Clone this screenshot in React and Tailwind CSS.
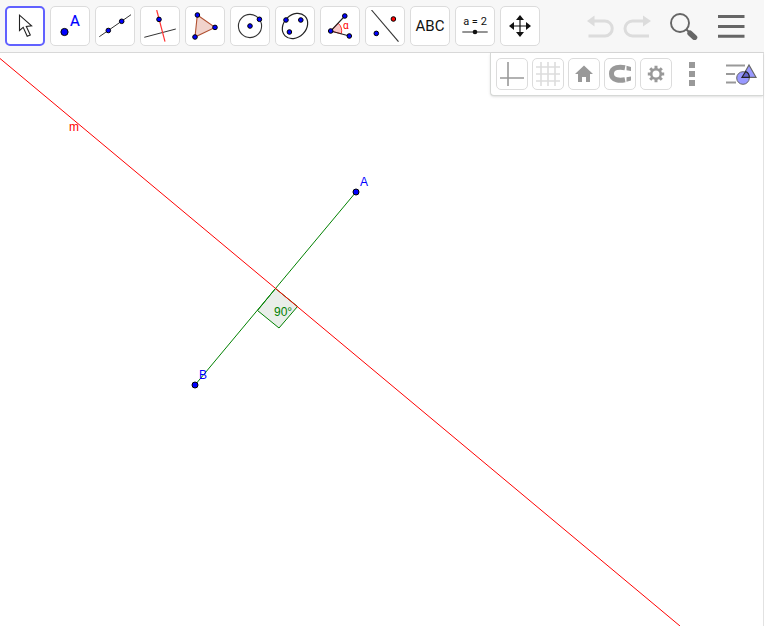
import { useState } from 'react'

const Dot = ({ x, y, r = 2.3, fill = '#0000ff' }) => (
  <circle cx={x} cy={y} r={r} fill={fill} stroke="#000" strokeWidth="1" />
)

const tools = [
  {
    name: 'Move',
    icon: <path d="M10.5 5.2V20.5L14.2 17.3L18.2 26.3L21.3 25L17.3 16.5L22.6 15.8Z" fill="#fff" stroke="#222" strokeWidth="1.1" />,
  },
  {
    name: 'Point',
    icon: (
      <>
        <Dot x={10.5} y={22} r={3.6} />
        <text x="16" y="16" fontSize="15" fill="#0000ff" stroke="#0000ff" strokeWidth="0.2">A</text>
      </>
    ),
  },
  {
    name: 'Line',
    icon: (
      <>
        <path d="M0.3 26.7L32 4.7" stroke="#333" />
        <Dot x={9.3} y={20.5} />
        <Dot x={22.7} y={11.3} />
      </>
    ),
  },
  {
    name: 'Perpendicular line',
    icon: (
      <>
        <path d="M0.3 27.3L31.8 19" stroke="#333" />
        <path d="M12.7 0L21 31.7" stroke="#ff3333" strokeWidth="1.2" />
        <Dot x={15} y={9.4} />
      </>
    ),
  },
  {
    name: 'Polygon',
    icon: (
      <>
        <path d="M8.3 5L26 17.4L6 27Z" fill="#f1d3cc" stroke="#b05030" strokeWidth="1.1" />
        <Dot x={8.4} y={5} />
        <Dot x={26} y={17.4} />
        <Dot x={6} y={27} />
      </>
    ),
  },
  {
    name: 'Circle with centre',
    icon: (
      <>
        <circle cx="16" cy="16" r="11.6" stroke="#333" strokeWidth="1.1" />
        <Dot x={16} y={16} />
        <Dot x={25.4} y={9.3} />
      </>
    ),
  },
  {
    name: 'Ellipse',
    icon: (
      <>
        <ellipse cx="16" cy="16" rx="14" ry="11.2" transform="rotate(-45 16 16)" stroke="#222" strokeWidth="1.2" />
        <Dot x={7} y={10} />
        <Dot x={21.8} y={10} />
        <Dot x={10.4} y={22} />
      </>
    ),
  },
  {
    name: 'Angle',
    icon: (
      <>
        <path d="M6.7 21L14.2 13.2A10.8 10.8 0 0 1 17.3 23.8Z" fill="#fac8c8" stroke="#ff3333" />
        <path d="M20.8 6L6.7 21L25.3 26" stroke="#222" strokeWidth="1.1" />
        <text x="19" y="19" fontSize="10" fill="#ff0000">α</text>
        <Dot x={6.7} y={21} />
        <Dot x={20.8} y={6} />
        <Dot x={25.3} y={26} />
      </>
    ),
  },
  {
    name: 'Reflect about line',
    icon: (
      <>
        <path d="M2.5 0L29.5 31.7" stroke="#333" strokeWidth="1.1" />
        <Dot x={24.4} y={9} fill="#ff0000" />
        <Dot x={7.3} y={23.4} />
      </>
    ),
  },
  {
    name: 'Text',
    icon: <text x="16" y="21" fontSize="15" textAnchor="middle" fill="#111">ABC</text>,
  },
  {
    name: 'Slider',
    icon: (
      <>
        <text x="16" y="15" fontSize="11" textAnchor="middle" fill="#111">a = 2</text>
        <path d="M3.3 22H28.7" stroke="#666" strokeWidth="1.4" />
        <circle cx="16" cy="22" r="2.3" fill="#111" />
      </>
    ),
  },
  {
    name: 'Move graphics view',
    icon: (
      <>
        <path d="M16 8V24M8 16H24" stroke="#111" strokeWidth="1.2" />
        <path d="M16 5L20 10H12ZM16 27L20 22H12ZM5 16L10 12V20ZM27 16L22 12V20Z" fill="#111" />
      </>
    ),
  },
]

const viewOptions = [
  {
    name: 'Show axes',
    icon: <path d="M8 0V24M0 16H24" stroke="#999" strokeWidth="1.6" />,
  },
  {
    name: 'Show grid',
    icon: <path d="M5 0V24M12 0V24M19 0V24M0 5H24M0 12H24M0 19H24" stroke="#ddd" strokeWidth="1.6" />,
  },
  {
    name: 'Standard view',
    icon: <path d="M12 3.5L21 12H18V20H14V15H10V20H6V12H3Z" fill="#999" />,
  },
  {
    name: 'Point capturing',
    icon: (
      <>
        <path d="M17 5.7C12.5 4.8 3.5 4.5 3.5 11.7C3.5 18.9 12.5 18.6 17 17.7" stroke="#999" strokeWidth="5" />
        <path d="M18.5 3.7L23 5V9L18.5 8.2ZM18.5 15.3L23 14.5V18.5L18.5 19.8Z" fill="#999" />
      </>
    ),
  },
  {
    name: 'Settings',
    icon: (
      <>
        <circle cx="12" cy="12" r="4.8" stroke="#999" strokeWidth="2.6" />
        <g stroke="#999" strokeWidth="3">
          <path d="M12 3.8V7M12 17V20.2M3.8 12H7M17 12H20.2" />
          <path d="M6.2 6.2L8.5 8.5M15.5 15.5L17.8 17.8M17.8 6.2L15.5 8.5M8.5 15.5L6.2 17.8" />
        </g>
      </>
    ),
  },
]

function Toolbar() {
  const [active, setActive] = useState('Move')

  return (
    <header className="flex items-center gap-[5px] border-b border-[#d8d8d8] bg-[#f7f7f7] py-1.5 pr-[19px] pl-[5px]">
      {tools.map(tool => (
        <button
          key={tool.name}
          aria-label={tool.name}
          aria-pressed={active === tool.name}
          onClick={() => setActive(tool.name)}
          className={`flex size-10 shrink-0 items-center justify-center rounded-[5px] bg-white ${active === tool.name ? 'border-2 border-[#6161ff]' : 'border border-[#dcdcdc]'}`}>
          <svg viewBox="0 0 32 32" fill="none" className="size-8 shrink-0 font-[Roboto,sans-serif]">{tool.icon}</svg>
        </button>
      ))}

      <div className="ml-auto flex items-center gap-[19px]">
        <div className="flex gap-2">
          <button aria-label="Undo">
            <svg viewBox="0 0 28 28" fill="none" className="size-7">
              <path d="M7 9H17.5A7.5 7.5 0 0 1 18 24H1.5" stroke="#dcdcdc" strokeWidth="3" />
              <path d="M0 9L7.5 3.5V14.5Z" fill="#dcdcdc" />
            </svg>
          </button>
          <button aria-label="Redo">
            <svg viewBox="0 0 28 28" fill="none" className="size-7">
              <path d="M21 9H9.5A7.5 7.5 0 0 0 9.5 24H26" stroke="#dcdcdc" strokeWidth="3" />
              <path d="M28 9L20 3.5V14.5Z" fill="#dcdcdc" />
            </svg>
          </button>
        </div>
        <button aria-label="Search">
          <svg viewBox="0 0 28 28" fill="none" className="size-7">
            <circle cx="10" cy="11" r="9" stroke="#666" strokeWidth="1.9" />
            <path d="M16.5 17.5L20 21" stroke="#666" strokeWidth="2" />
            <path d="M20 21.2L24.6 25.4" stroke="#666" strokeWidth="5.4" strokeLinecap="round" />
          </svg>
        </button>
        <button aria-label="Menu">
          <svg viewBox="0 0 28 28" fill="none" className="size-7">
            <path d="M1 4.5H27.5M1 14.5H27.5M1 24.2H27.5" stroke="#666" strokeWidth="3" />
          </svg>
        </button>
      </div>
    </header>
  )
}

function StyleBar() {
  return (
    <div className="absolute top-0 right-0 flex items-center gap-1 rounded-bl border-b border-l border-[#d6d8d6] bg-white py-[5px] pr-[5px] pl-[5px] shadow-sm">
      {viewOptions.map(option => (
        <button
          key={option.name}
          aria-label={option.name}
          className="flex size-8 items-center justify-center rounded-[5px] border border-[#dcdcdc] bg-white">
          <svg viewBox="0 0 24 24" fill="none" className="size-6 shrink-0">{option.icon}</svg>
        </button>
      ))}
      <button aria-label="More" className="flex size-8 items-center justify-center">
        <svg viewBox="0 0 24 24" className="size-6">
          <path d="M9 0H15V6H9ZM9 9H15V15H9ZM9 18H15V24H9Z" fill="#999" />
        </svg>
      </button>
      <button aria-label="Algebra view" className="ml-3">
        <svg viewBox="0 0 34 24" fill="none" className="h-6 w-[34px]">
          <path d="M2 3.5H21M2 12H11M2 20.5H12" stroke="#999" strokeWidth="2" />
          <path d="M25 3L32 15.3H18Z" fill="#9999ff" stroke="#666" strokeWidth="1.2" />
          <circle cx="19" cy="16" r="6.3" fill="#9999ff" stroke="#666" />
          <path d="M21.7 9.5A6.3 6.3 0 0 1 25.3 15.3H18Z" fill="#6666cc" stroke="#222" strokeWidth="1.2" />
        </svg>
      </button>
    </div>
  )
}

// Perpendicular bisector m of segment AB
function Construction() {
  return (
    <svg className="block h-[573px] w-full font-['Liberation_Sans',Arial,sans-serif] text-xs" fill="none">
      <path d="M275.5 235.5L297.5 253.5L279 275L257.5 257.5Z" fill="#e9eee9" stroke="#008000" />
      <path d="M195 332L356 139" stroke="#008000" />
      <path d="M0 5.5L680 573" stroke="#ff0000" />
      <circle cx="356" cy="139" r="3" fill="#0000ff" stroke="#000" />
      <circle cx="195" cy="332" r="3" fill="#0000ff" stroke="#000" />
      <text x="360" y="133" fill="#0000ff">A</text>
      <text x="199" y="326" fill="#0000ff">B</text>
      <text x="69" y="78" fill="#ff0000">m</text>
      <text x="274" y="263" fill="#008000">90°</text>
    </svg>
  )
}

export default function App() {
  return (
    <div className="min-h-screen bg-white">
      <div className="mr-px">
        <Toolbar />
        <main className="relative border-r border-[#e2e2e2]">
          <Construction />
          <StyleBar />
        </main>
      </div>
    </div>
  )
}
